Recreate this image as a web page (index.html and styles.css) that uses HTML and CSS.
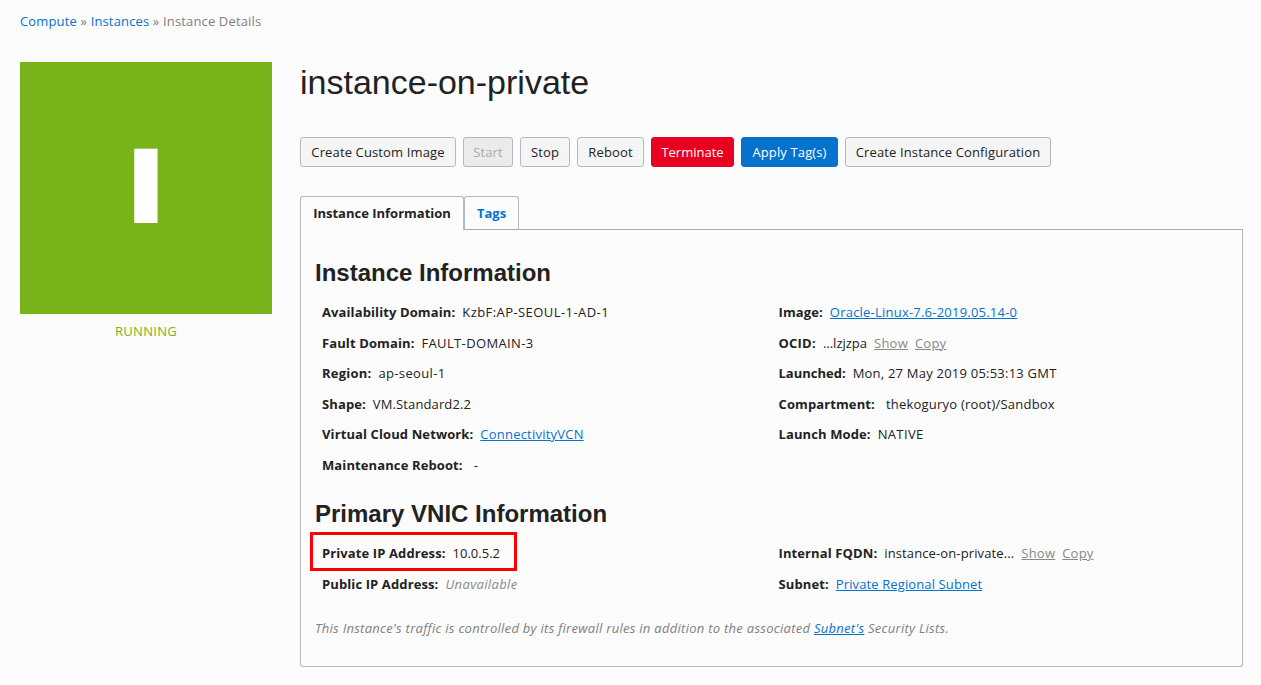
FILE: index.html
```html
<!DOCTYPE html>
<html lang="en">
<head>
<meta charset="utf-8">
<title>Instance Details</title>
<link rel="stylesheet" href="styles.css">
</head>
<body>
<nav class="breadcrumb"><a href="#">Compute</a> » <a href="#">Instances</a> » <span>Instance Details</span></nav>
<div class="page">
  <aside class="status">
    <div class="tile"><span class="letter">I</span></div>
    <div class="state">RUNNING</div>
  </aside>
  <main class="main">
    <h1>instance-on-private</h1>
    <div class="actions">
      <button class="btn w-image">Create Custom Image</button>
      <button class="btn w-start" disabled>Start</button>
      <button class="btn w-stop">Stop</button>
      <button class="btn w-reboot">Reboot</button>
      <button class="btn danger w-terminate">Terminate</button>
      <button class="btn primary w-tags">Apply Tag(s)</button>
      <button class="btn w-config">Create Instance Configuration</button>
    </div>
    <div class="tabs">
      <div class="tab active">Instance Information</div>
      <div class="tab second">Tags</div>
      <div class="tab-rule"></div>
    </div>
    <section class="panel">
      <h2>Instance Information</h2>
      <div class="columns">
        <div class="col">
          <div class="row"><b>Availability Domain:</b><span class="track-xl">KzbF:AP-SEOUL-1-AD-1</span></div>
          <div class="row"><b>Fault Domain:</b><span class="track-l">FAULT-DOMAIN-3</span></div>
          <div class="row"><b class="track-m">Region:</b><span class="track-l">ap-seoul-1</span></div>
          <div class="row"><b>Shape:</b><span class="track-s">VM.Standard2.2</span></div>
          <div class="row"><b>Virtual Cloud Network:</b><a class="track-m" href="#">ConnectivityVCN</a></div>
          <div class="row wide-gap"><b>Maintenance Reboot:</b><span>-</span></div>
        </div>
        <div class="col">
          <div class="row"><b>Image:</b><a class="track-m" href="#">Oracle-Linux-7.6-2019.05.14-0</a></div>
          <div class="row"><b class="track-m">OCID:</b><span class="track-0">...lzjzpa</span><a class="muted track-m" href="#">Show</a><a class="muted track-m" href="#">Copy</a></div>
          <div class="row"><b class="track-0">Launched:</b><span class="track-m">Mon, 27 May 2019 05:53:13 GMT</span></div>
          <div class="row wide-gap"><b>Compartment:</b><span class="track-m">thekoguryo (root)/Sandbox</span></div>
          <div class="row"><b>Launch Mode:</b><span class="track-l">NATIVE</span></div>
        </div>
      </div>
      <h2 class="vnic">Primary VNIC Information</h2>
      <div class="columns">
        <div class="col">
          <div class="row marked"><b>Private IP Address:</b><span class="track-0">10.0.5.2</span></div>
          <div class="row"><b>Public IP Address:</b><i class="track-l">Unavailable</i></div>
        </div>
        <div class="col">
          <div class="row"><b>Internal FQDN:</b><span class="track-s">instance-on-private...</span><a class="muted track-m" href="#">Show</a><a class="muted track-m" href="#">Copy</a></div>
          <div class="row"><b>Subnet:</b><a class="track-s" href="#">Private Regional Subnet</a></div>
        </div>
      </div>
      <p class="note">This Instance's traffic is controlled by its firewall rules in addition to the associated <a href="#">Subnet's</a> Security Lists.</p>
    </section>
  </main>
</div>
</body>
</html>
```
FILE: styles.css
```css
* { box-sizing: border-box; }
body { margin: 0; height: 685px; overflow: hidden; background: #fcfcfc; color: #222; font: 13px/20px "Open Sans", "Noto Sans", sans-serif; }
a { color: #0572ce; }
b { font-weight: 700; letter-spacing: .11px; }
.breadcrumb { padding: 11px 20px 0; height: 62px; color: #808080; letter-spacing: .15px; white-space: nowrap; }
.breadcrumb a { text-decoration: none; }
.page { display: flex; padding: 0 18px 0 20px; gap: 28px; }
.status { width: 252px; flex: none; }
.tile { height: 252px; background: #77b319; display: flex; align-items: center; justify-content: center; }
.letter { font: bold 107.5px/248px "Liberation Sans", Arial, sans-serif; height: 252px; color: #fff; transform: scaleX(1.5); }
.state { margin-top: 7px; text-align: center; color: #77b319; letter-spacing: .3px; }
.main { flex: 1; min-width: 0; }
h1 { margin: 0; height: 75px; font: 400 34px/40px "Liberation Sans", Arial, sans-serif; }
.actions { display: flex; gap: 7px; }
.btn { height: 30px; padding: 0; border: 1px solid #b3b9c3; border-radius: 3px; background: #f5f5f5; color: #222; font: inherit; letter-spacing: .13px; white-space: nowrap; }
.btn:disabled { background: #ebebeb; color: #aaa; }
.btn.danger { background: #e7001f; border-color: #e7001f; color: #fff; letter-spacing: 0; }
.btn.primary { background: #0572ce; border-color: #0572ce; color: #fff; }
.w-image { width: 156px; }
.w-start, .w-stop { width: 50px; }
.w-reboot { width: 67px; }
.w-terminate { width: 83px; }
.w-tags { width: 97px; }
.w-config { width: 206px; }
.tabs { display: flex; margin-top: 29px; height: 34px; font-weight: 700; line-height: 33px; }
.tab { width: 164px; border: 1px solid #b3b9c3; border-bottom: 0; border-radius: 3px 3px 0 0; text-align: center; white-space: nowrap; }
.tab.second { width: 55px; border-bottom: 1px solid #a5abb0; color: #0572ce; }
.tab-rule { flex: 1; border-bottom: 1px solid #a5abb0; }
.panel { height: 437px; border: 1px solid #b3b9c3; border-top: 0; border-radius: 0 0 3px 3px; padding: 28px 14px 0; }
h2 { margin: 0; font: bold 24px/30px "Liberation Sans", Arial, sans-serif; }
.columns { display: grid; grid-template-columns: 456.5px 1fr; margin-top: 9px; padding-left: 7px; }
.row { display: flex; gap: 7px; height: 30.5px; line-height: 30px; white-space: nowrap; }
.row.wide-gap { gap: 11px; }
.row i, .row .muted { color: #888; }
.track-0 { letter-spacing: 0; }
.track-s { letter-spacing: .12px; }
.track-m { letter-spacing: .22px; }
.track-l { letter-spacing: .36px; }
.track-xl { letter-spacing: .43px; }
.vnic { margin-top: 19px; }
.marked { position: relative; }
.marked::after { content: ""; box-sizing: border-box; position: absolute; left: -12px; top: -6px; width: 207px; height: 39px; border: 3px solid #f00; }
.note { margin: 19px 0 0; color: #808080; font-style: italic; letter-spacing: .28px; white-space: nowrap; }
```
